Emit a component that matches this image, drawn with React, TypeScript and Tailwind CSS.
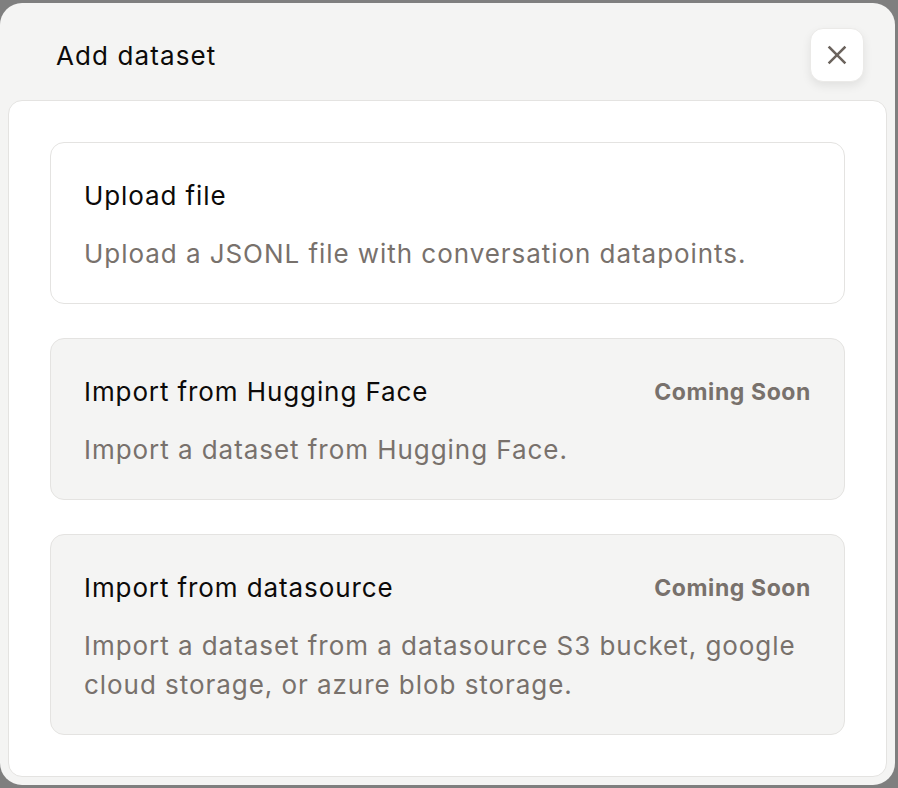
import * as React from 'react'

interface OptionCardProps {
  title: string
  description: string
  disabled?: boolean
}

function OptionCard({ title, description, disabled }: OptionCardProps) {
  return (
    <div
      className={
        disabled
          ? 'rounded-[14px] border border-[#e4e3e1] bg-[#f4f4f3] pl-[33px] pr-[33px] pt-[35px] pb-[30px]'
          : 'rounded-[14px] border border-[#e4e3e1] bg-white pl-[33px] pr-[33px] pt-[35px] pb-[30px]'
      }
    >
      <div className="flex items-center justify-between">
        <h3 className="text-[26px] leading-[36px] font-normal tracking-[0.9px] text-[#0c0a09]">{title}</h3>
        {disabled && (
          <span className="text-[23px] leading-[36px] font-bold tracking-[0.6px] text-[#78716c]">Coming Soon</span>
        )}
      </div>
      <p className="mt-[20px] text-[26px] leading-[39px] tracking-[0.95px] text-[#78716c]">{description}</p>
    </div>
  )
}

export default function App() {
  return (
    <div
      className="w-[898px] h-[788px] bg-[#7f7f7f] pt-[3px] pr-[3px] pb-[3px] overflow-hidden"
      style={{ fontFamily: 'Inter, "Noto Sans", sans-serif' }}
    >
      <div className="h-full w-full rounded-[22px] bg-[#f4f4f3] flex flex-col px-[8px] pb-[8px]">
        {/* Header */}
        <div className="flex items-center justify-between h-[97px] pt-[7px] pl-[48px] pr-[23px]">
          <h2 className="text-[26px] font-normal tracking-[1.1px] text-[#0c0a09]">Add dataset</h2>
          <button className="w-[54px] h-[54px] rounded-[13px] bg-white border border-[#ebeae8] shadow-[0_4px_10px_rgba(0,0,0,0.08)] flex items-center justify-center">
            <svg width="24" height="24" viewBox="0 0 24 24" fill="none" stroke="#6b635d" strokeWidth="2.5" strokeLinecap="square">
              <path d="M4.5 4.5L19.5 19.5" />
              <path d="M19.5 4.5L4.5 19.5" />
            </svg>
          </button>
        </div>

        {/* Body */}
        <div className="flex-1 rounded-[14px] border border-[#e4e3e1] bg-white p-[41px] flex flex-col gap-[34px]">
          <OptionCard
            title="Upload file"
            description="Upload a JSONL file with conversation datapoints."
          />
          <OptionCard
            title="Import from Hugging Face"
            description="Import a dataset from Hugging Face."
            disabled
          />
          <OptionCard
            title="Import from datasource"
            description="Import a dataset from a datasource S3 bucket, google cloud storage, or azure blob storage."
            disabled
          />
        </div>
      </div>
    </div>
  )
}
